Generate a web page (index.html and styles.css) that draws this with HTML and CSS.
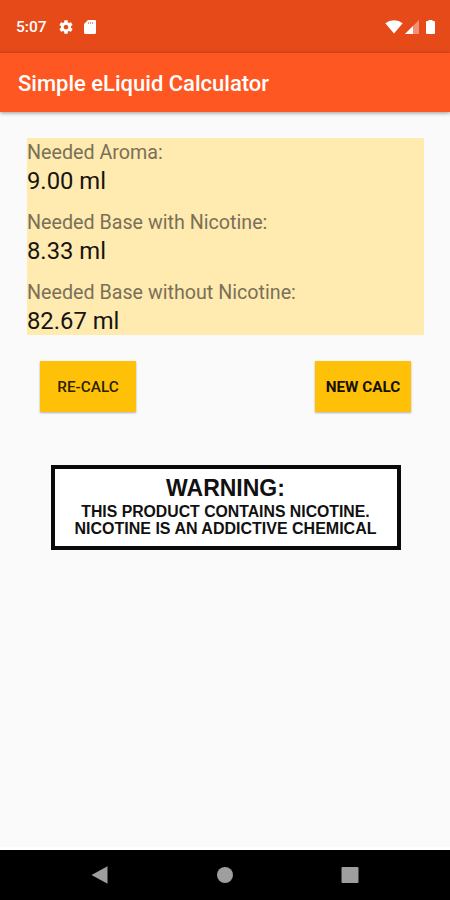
FILE: index.html
```
<!DOCTYPE html>
<html lang="en">

<head>
    <meta charset="UTF-8" />
    <meta name="viewport" content="width=device-width, initial-scale=1.0" />
    <title>Simple eLiquid Calculator</title>
    <link rel="stylesheet" href="styles.css">
</head>

<body>
    <div class="wrapper">
        <!-- Status bar -->
        <div class="status-bar">
            <span class="time">5:07</span>
            <svg class="icon-gear" width="16" height="16" viewBox="0 0 24 24">
                <path fill="#fff" d="M19.43 12.98c.04-.32.07-.64.07-.98s-.03-.66-.07-.98l2.11-1.65c.19-.15.24-.42.12-.64l-2-3.46c-.12-.22-.39-.3-.61-.22l-2.49 1c-.52-.4-1.08-.73-1.69-.98l-.38-2.65C14.46 2.18 14.25 2 14 2h-4c-.25 0-.46.18-.49.42l-.38 2.65c-.61.25-1.17.59-1.69.98l-2.49-1c-.23-.09-.49 0-.61.22l-2 3.46c-.13.22-.07.49.12.64l2.11 1.65c-.04.32-.07.65-.07.98s.03.66.07.98l-2.11 1.65c-.19.15-.24.42-.12.64l2 3.46c.12.22.39.3.61.22l2.49-1c.52.4 1.08.73 1.69.98l.38 2.65c.03.24.24.42.49.42h4c.25 0 .46-.18.49-.42l.38-2.65c.61-.25 1.17-.59 1.69-.98l2.49 1c.23.09.49 0 .61-.22l2-3.46c.12-.22.07-.49-.12-.64l-2.11-1.65zM12 15.5c-1.93 0-3.5-1.57-3.5-3.5s1.57-3.5 3.5-3.5 3.5 1.57 3.5 3.5-1.57 3.5-3.5 3.5z" />
            </svg>
            <svg class="icon-card" width="12" height="14" viewBox="0 0 12 14">
                <path fill="#fff" d="M4 0h6.800q1.200 0 1.200 1.200v11.600q0 1.200-1.200 1.200H1.200Q0 14 0 12.800V4z" />
                <path stroke="#e64a19" stroke-opacity=".6" d="M4.500 2v2M6.500 2v2M8.500 2v2" />
            </svg>
            <svg class="icon-wifi" width="18" height="14" viewBox="0 0 18 14">
                <path fill="#fff" d="M9 13.500L.3 3.200Q4 .3 9 .3t8.700 2.900z" />
            </svg>
            <svg class="icon-signal" width="14" height="14" viewBox="0 0 14 14">
                <path fill="#fff" fill-opacity=".4" d="M14 0v14H0z" />
                <path fill="#fff" d="M8 6v8H0z" />
            </svg>
            <svg class="icon-battery" width="9" height="14" viewBox="0 0 9 14">
                <path fill="#fff" d="M2.500 0h4v1H8q1 0 1 1V13q0 1-1 1H1q-1 0-1-1V2q0-1 1-1h1.500z" />
            </svg>
        </div>

        <div class="app-bar">
            <h1>Simple eLiquid Calculator</h1>
        </div>

        <div class="content">
            <div class="results">
                <div class="result">
                    <div class="label">Needed Aroma:</div>
                    <div class="value">9.00 ml</div>
                </div>
                <div class="result">
                    <div class="label">Needed Base with Nicotine:</div>
                    <div class="value">8.33 ml</div>
                </div>
                <div class="result">
                    <div class="label">Needed Base without Nicotine:</div>
                    <div class="value">82.67 ml</div>
                </div>
            </div>

            <div class="buttons">
                <button class="btn">RE-CALC</button>
                <button class="btn btn-new">NEW CALC</button>
            </div>

            <div class="warning">
                <div class="warning-title">WARNING:</div>
                <div class="warning-text">THIS PRODUCT CONTAINS NICOTINE.</div>
                <div class="warning-text warning-last">NICOTINE IS AN ADDICTIVE CHEMICAL</div>
            </div>
        </div>

        <!-- Navigation bar -->
        <div class="nav-bar">
            <svg width="18" height="18" viewBox="0 0 18 18">
                <path fill="#9e9e9e" d="M.5 9L16.500.3v17.400z" />
            </svg>
            <svg width="18" height="18" viewBox="0 0 18 18">
                <circle cx="9" cy="9" r="8" fill="#9e9e9e" />
            </svg>
            <svg width="18" height="18" viewBox="0 0 18 18">
                <rect x=".5" y="1" width="17" height="16" rx="1" fill="#9e9e9e" />
            </svg>
        </div>
    </div>
</body>

</html>
```
FILE: styles.css
```
* {
    box-sizing: border-box;
}

body {
    margin: 0;
    font-family: Roboto, sans-serif;
    background: #fafafa;
}

.wrapper {
    display: flex;
    flex-direction: column;
    height: 900px;
    overflow: hidden;
}

.status-bar {
    display: flex;
    align-items: center;
    height: 53px;
    padding: 1px 15px 0 16px;
    background: #e64a19;
    color: #fff;
}

.time {
    width: 42px;
    font-size: 15.5px;
    font-weight: 500;
}

.icon-card {
    margin-left: 10px;
}

.icon-wifi {
    margin-left: auto;
}

.icon-signal {
    margin-left: 2px;
}

.icon-battery {
    margin-left: 7px;
}

.app-bar {
    display: flex;
    align-items: center;
    height: 59px;
    padding: 2px 18px 0;
    background: #ff5722;
    color: #fff;
    box-shadow: 0 1px 4px rgba(0, 0, 0, 0.4);
}

.app-bar h1 {
    margin: 0;
    font-size: 22px;
    font-weight: 500;
}

.content {
    flex: 1;
    padding: 26px 26px 0 27px;
    border-bottom: 3px solid #fff;
}

.results {
    display: flex;
    flex-direction: column;
    gap: 13px;
    background: #ffeab0;
}

.label {
    padding-top: 1px;
    font-size: 19.7px;
    line-height: 28px;
    color: #7a7057;
}

.value {
    font-size: 23.8px;
    line-height: 28px;
    color: #161410;
}

.buttons {
    display: flex;
    justify-content: space-between;
    padding: 26px 13px 0 13px;
}

.btn {
    width: 96px;
    height: 51px;
    padding: 0;
    border: none;
    background: #ffc107;
    color: #2b2104;
    font-family: inherit;
    font-size: 15.3px;
    font-weight: 500;
    box-shadow: 0 1px 2px rgba(0, 0, 0, 0.3);
}

.btn-new {
    color: #161101;
    font-weight: 700;
}

.warning {
    width: 350px;
    height: 85px;
    margin: 53px 0 0 23.5px;
    padding-top: 6px;
    border: 4px solid #0a0a0a;
    background: #fff;
    color: #111;
    font-family: "Liberation Sans", Arial, sans-serif;
    font-weight: 700;
    text-align: center;
    white-space: nowrap;
}

.warning-title {
    margin-bottom: 2px;
    font-size: 23px;
    line-height: 26px;
}

.warning-text {
    font-size: 15.8px;
    line-height: 17px;
}

.warning-last {
    font-size: 16px;
}

.nav-bar {
    display: flex;
    justify-content: space-between;
    align-items: center;
    height: 50px;
    padding: 0 91px;
    background: #000;
}
```
